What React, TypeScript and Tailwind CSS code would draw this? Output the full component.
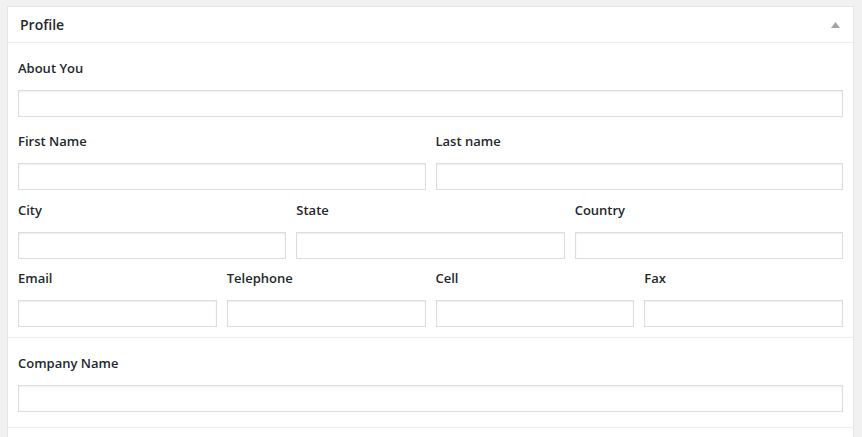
const inputClass =
  'block w-full h-[27px] bg-white border border-[#dddddd] shadow-[inset_0_1px_2px_rgba(0,0,0,0.07)] outline-none';

function Field({ label }: { label: string }) {
  return (
    <div>
      <label className="block text-[13px] leading-[20px] font-semibold text-[#23282d] mb-[12px]">{label}</label>
      <input type="text" className={inputClass} />
    </div>
  );
}

export default function App() {
  return (
    <div
      className="min-h-screen bg-[#f1f1f1] pt-[6px] pl-[7px] pr-[8px]"
      style={{ fontFamily: '"Open Sans", "Liberation Sans", sans-serif' }}
    >
      <div className="bg-white border border-[#e5e5e5] min-h-[440px]">
        <div className="h-[36px] flex items-center justify-between pl-[12px] pr-[13px] border-b border-[#eeeeee]">
          <h2 className="text-[14px] leading-[19px] font-semibold text-[#23282d] pb-[1px]">Profile</h2>
          <svg width="9" height="6" viewBox="0 0 9 6" className="mt-[1px]">
            <path d="M4.5 0 L9 6 L0 6 Z" fill="#a0a5aa" />
          </svg>
        </div>

        <div className="pt-[15px] px-[10px] pb-[10px]">
          <Field label="About You" />
          <div className="grid grid-cols-2 gap-x-[10px] mt-[14px]">
            <Field label="First Name" />
            <Field label="Last name" />
          </div>
          <div className="grid grid-cols-3 gap-x-[10px] mt-[10px]">
            <Field label="City" />
            <Field label="State" />
            <Field label="Country" />
          </div>
          <div className="grid grid-cols-4 gap-x-[10px] mt-[9px]">
            <Field label="Email" />
            <Field label="Telephone" />
            <Field label="Cell" />
            <Field label="Fax" />
          </div>
        </div>

        <div className="border-t border-b border-[#eeeeee] pt-[15px] px-[10px] pb-[15px]">
          <Field label="Company Name" />
        </div>
      </div>
    </div>
  );
}
